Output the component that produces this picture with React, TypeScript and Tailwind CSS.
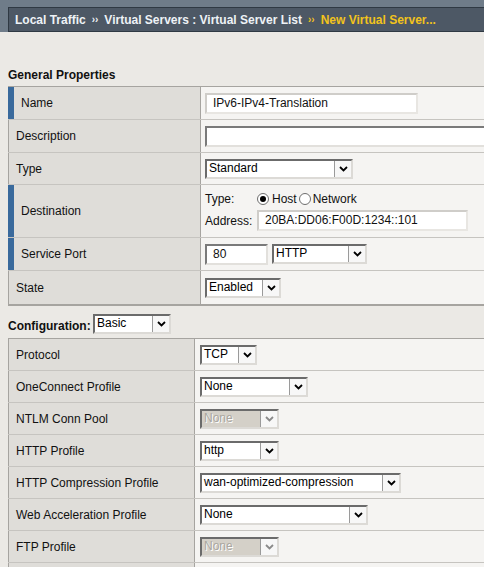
import React from 'react'

type SelectProps = { w: number; value: string; disabled?: boolean }

const Chevron = ({ disabled }: { disabled?: boolean }) => (
  <svg width="9" height="6" viewBox="0 0 9 6">
    <polyline
      points="1,1 4.5,4.5 8,1"
      fill="none"
      stroke={disabled ? '#8a8a8a' : '#000'}
      strokeWidth="1.8"
    />
  </svg>
)

function Select({ w, value, disabled }: SelectProps) {
  return (
    <div
      style={{ width: w }}
      className={`h-[20px] flex border-2 border-t-[#6b6b6b] border-l-[#6b6b6b] border-b-[#dcdad6] border-r-[#dcdad6] ${
        disabled ? 'bg-[#d4d0c8]' : 'bg-white'
      }`}
    >
      <div
        className={`flex-1 pl-[2px] leading-[15px] whitespace-nowrap overflow-hidden ${
          disabled ? 'text-[#a9a69f] [text-shadow:1px_1px_0_#fff]' : 'text-black'
        }`}
      >
        {value}
      </div>
      <div className="w-[17px] h-full border-l border-[#9a9a9a] bg-[#f7f7f7] flex items-center justify-center">
        <Chevron disabled={disabled} />
      </div>
    </div>
  )
}

function TextBox({ w, value, dark }: { w: number; value?: string; dark?: boolean }) {
  return (
    <div
      style={{ width: w }}
      className={`h-[21px] bg-white leading-[17px] pl-[6px] whitespace-nowrap overflow-hidden ${
        dark
          ? 'border-2 border-t-[#7a7a7a] border-l-[#7a7a7a] border-b-[#e2e0dc] border-r-[#e2e0dc]'
          : 'border-2 border-t-[#cfcdc9] border-l-[#cfcdc9] border-b-[#e8e6e2] border-r-[#e8e6e2]'
      }`}
    >
      {value}
    </div>
  )
}

function Radio({ checked }: { checked?: boolean }) {
  return (
    <span className="w-[12px] h-[12px] rounded-full border border-[#6e6e6e] bg-white flex items-center justify-center">
      {checked && <span className="w-[6px] h-[6px] rounded-full bg-black" />}
    </span>
  )
}

type Row1 = { label: string; h: number; req?: boolean; content: React.ReactNode }

const general: Row1[] = [
  { label: 'Name', h: 33, req: true, content: <TextBox w={213} value="IPv6-IPv4-Translation" /> },
  { label: 'Description', h: 33, content: <TextBox w={300} dark /> },
  { label: 'Type', h: 32, content: <Select w={148} value="Standard" /> },
  {
    label: 'Destination',
    h: 53,
    req: true,
    content: (
      <div className="flex flex-col gap-[3px]">
        <div className="flex items-center h-[16px]">
          <span className="w-[52px]">Type:</span>
          <Radio checked />
          <span className="ml-[3px]">Host</span>
          <span className="ml-[2px]"><Radio /></span>
          <span className="ml-[2px]">Network</span>
        </div>
        <div className="flex items-center">
          <span className="w-[52px]">Address:</span>
          <TextBox w={211} value="20BA:DD06:F00D:1234::101" />
        </div>
      </div>
    ),
  },
  {
    label: 'Service Port',
    h: 33,
    req: true,
    content: (
      <div className="flex gap-[4px]">
        <TextBox w={63} value="80" dark />
        <Select w={95} value="HTTP" />
      </div>
    ),
  },
  { label: 'State', h: 33, content: <Select w={76} value="Enabled" /> },
]

const config: { label: string; select?: SelectProps }[] = [
  { label: 'Protocol', select: { w: 57, value: 'TCP' } },
  { label: 'OneConnect Profile', select: { w: 108, value: 'None' } },
  { label: 'NTLM Conn Pool', select: { w: 79, value: 'None', disabled: true } },
  { label: 'HTTP Profile', select: { w: 79, value: 'http' } },
  { label: 'HTTP Compression Profile', select: { w: 201, value: 'wan-optimized-compression' } },
  { label: 'Web Acceleration Profile', select: { w: 168, value: 'None' } },
  { label: 'FTP Profile', select: { w: 79, value: 'None', disabled: true } },
  // next row only peeks in at the bottom edge
  { label: '' },
]

export default function App() {
  return (
    <div className="w-[484px] h-[567px] overflow-hidden bg-[#ebe9e5] font-['Liberation_Sans',Arial,sans-serif] text-[12px] text-[#111]">
      {/* breadcrumb bar */}
      <div className="bg-[#6f7c89] pt-[7px] pl-[8px] h-[32px]">
        <div className="h-[25px] bg-[#4d5865] border border-r-0 border-[#2f3943] flex items-center pl-[6px] font-bold text-[#eef2f6] whitespace-nowrap">
          <span>Local Traffic</span>
          <span className="mx-[6px] text-[10px]">››</span>
          <span>Virtual Servers : Virtual Server List</span>
          <span className="mx-[6px] text-[10px] text-[#f2c31c]">››</span>
          <span className="text-[#f2c31c]">New Virtual Server...</span>
        </div>
      </div>

      <div className="pt-[36px] pl-[8px] leading-[14px] font-bold">General Properties</div>

      <div className="ml-[8px] mt-[4px] border-t border-b-2 border-[#a6a4a0]">
        {general.map((r, i) => (
          <div
            key={r.label}
            style={{ height: r.h }}
            className={`flex ${i < general.length - 1 ? 'border-b border-[#c6c4c0]' : ''}`}
          >
            <div
              className={`w-[192px] shrink-0 flex items-center pl-[7px] bg-[#dfddd9] ${
                r.req ? 'border-l-[6px] border-[#3a6a9c]' : 'border-l border-[#a6a4a0]'
              }`}
            >
              {r.label}
            </div>
            <div className="flex-1 flex items-center pl-[4px] bg-[#f5f4f2] border-l border-[#a6a4a0]">
              {r.content}
            </div>
          </div>
        ))}
      </div>

      <div className="flex items-end mt-[8px] pl-[8px]">
        <span className="font-bold w-[85px] leading-[16px]">Configuration:</span>
        <Select w={78} value="Basic" />
      </div>

      <div className="ml-[8px] mt-[4px] border-t border-[#a6a4a0]">
        {config.map((r, i) => (
          <div key={i} className="flex h-[32px] border-b border-[#c6c4c0]">
            <div className="w-[186px] shrink-0 flex items-center pl-[7px] bg-[#dfddd9] border-l border-[#a6a4a0]">
              {r.label}
            </div>
            <div className="flex-1 flex items-center pl-[5px] bg-[#f5f4f2] border-l border-[#a6a4a0]">
              {r.select && <Select {...r.select} />}
            </div>
          </div>
        ))}
      </div>
    </div>
  )
}
